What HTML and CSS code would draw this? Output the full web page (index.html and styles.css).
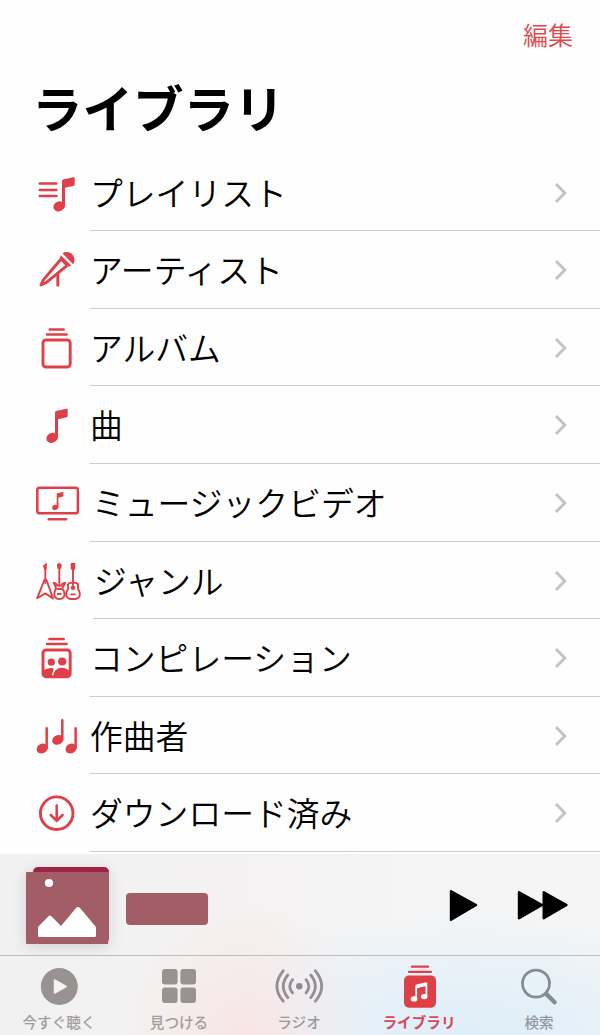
FILE: index.html
```html
<!DOCTYPE html>
<html lang="ja">
<head>
<meta charset="utf-8">
<title>ライブラリ</title>
<link rel="stylesheet" href="styles.css">
</head>
<body>
<svg class="defs" width="0" height="0">
  <symbol id="note" viewBox="0 0 22 35" overflow="visible">
    <path d="M9 3.9Q9 2.8 10.1 2.5L20.3.2Q21.7 0 21.7 1V7.6Q21.7 8.5 20.8 8.7L12 10.8V29H9Z"/>
    <ellipse cx="5.9" cy="29.4" rx="5.7" ry="4.9" transform="rotate(-25 5.9 29.4)"/>
    <path d="M9 20H12V29Q12 31 10 32Z"/>
  </symbol>
  <symbol id="chevron" viewBox="0 0 14 24"><path d="M2 2.9L10.8 12L2 21.1"/></symbol>
</svg>
<main class="app">
  <header class="nav"><a class="edit">編集</a></header>
  <h1 class="title">ライブラリ</h1>
  <ul class="list">
    <li class="row">
      <svg class="icon" viewBox="0 0 90 77"><path class="line thin" d="M39.8 29.6H56.4M39.8 36H56.4M39.8 42H56.4"/><use href="#note" x="53" y="23" width="22" height="35"/></svg>
      <div class="cell"><span>プレイリスト</span><svg class="chev"><use href="#chevron"/></svg></div>
    </li>
    <li class="row">
      <svg class="icon" viewBox="0 0 90 77"><path d="M62.5 22.5C66 19.7 70.6 21 72.8 24C75.1 27 75.1 30.8 73 33.2Z"/><path d="M60.9 24.2L71.2 34.6Q69.2 36 66.5 35.4L60.2 29.2Q59.5 26.4 60.9 24.2Z"/><path class="gap" d="M61.6 23.1L72.7 34.2"/><path class="line" d="M60.2 29L43.2 49.1L41 54L45.9 51.8L66.3 35.2"/><path class="line" d="M57.8 42.5V54.3"/></svg>
      <div class="cell"><span>アーティスト</span><svg class="chev"><use href="#chevron"/></svg></div>
    </li>
    <li class="row">
      <svg class="icon" viewBox="0 0 90 77"><path class="line thin" d="M49.7 20.4H63.7M47 25.4H66.6"/><rect class="line" x="43" y="31" width="27.2" height="27" rx="3"/></svg>
      <div class="cell"><span>アルバム</span><svg class="chev"><use href="#chevron"/></svg></div>
    </li>
    <li class="row">
      <svg class="icon" viewBox="0 0 90 77"><use href="#note" x="46" y="22.5" width="22" height="35"/></svg>
      <div class="cell"><span>曲</span><svg class="chev"><use href="#chevron"/></svg></div>
    </li>
    <li class="row wide">
      <svg class="icon" viewBox="0 0 90 77"><rect class="line thin" x="37.3" y="23.7" width="40.6" height="25.6" rx="2.4"/><path class="line thin" d="M48.8 55.2H66.2"/><use href="#note" x="51.3" y="28" width="13" height="18.4"/></svg>
      <div class="cell"><span>ミュージックビデオ</span><svg class="chev"><use href="#chevron"/></svg></div>
    </li>
    <li class="row wider">
      <svg class="icon" viewBox="0 0 90 77"><path d="M42.6 24L46.8 20.6V26.6L45.5 29L44 26ZM56.9 22.6L59.3 20.7L61.7 22.6L61.2 26.8H57.4ZM70.7 21H75.3V26.6L73.8 28.4H72.2L70.7 26.6Z"/><path class="line fine" d="M45.3 26V41M59.3 26V44M73 26V43"/><path class="line fine" d="M44.4 38L37.2 56.2L45.3 51.4L53 56.4L46.5 38ZM53.6 40.6Q56.6 41 57.4 43.6H61.2Q62 41 65.2 40.6Q64 43.4 62.9 44.8Q61.7 46.8 63.7 48.7Q66 54.4 61.8 56.6Q59.3 57.3 56.8 56.6Q52.9 54.4 55 48.6Q56.7 46.3 55.3 44.4ZM70.2 40.9H76Q78.9 41.8 78 44.8Q77.3 46.5 78.9 48.4Q81.8 54.7 76.5 56.8Q73 57.3 69.6 56.8Q64.4 54.7 67.2 48.4Q68.8 46.5 68 44.8Q67.2 41.8 70.2 40.9Z"/><path class="line fine" d="M57.4 47H61.2M57.8 52H60.8M71.2 52.4H74.8"/><circle cx="73" cy="45.8" r="2.2"/></svg>
      <div class="cell"><span>ジャンル</span><svg class="chev"><use href="#chevron"/></svg></div>
    </li>
    <li class="row">
      <svg class="icon" viewBox="0 0 90 77"><path class="line thin" d="M49.4 20.1H63.7M47 25.1H66.6"/><rect class="line" x="43" y="31" width="27.2" height="26.7" rx="3"/><circle cx="51.3" cy="43.2" r="3.6"/><circle cx="62.2" cy="42.5" r="4.1"/><path d="M43 51.8Q46.5 48.9 51.5 49.1Q54.1 49.4 53.5 51.4Q51.4 54 52 57.5H45Q43 57 43 55ZM53.3 57.5Q53.8 48.8 62 48.8Q66.6 48.8 70 52.5V57.5Z"/></svg>
      <div class="cell"><span>コンピレーション</span><svg class="chev"><use href="#chevron"/></svg></div>
    </li>
    <li class="row">
      <svg class="icon" viewBox="0 0 90 77"><path class="line thin" d="M46.7 31.2V51M62.3 23.2V42.6M75.6 31.2V51"/><ellipse cx="42.2" cy="51.5" rx="5.8" ry="4.7" transform="rotate(-28 42.2 51.5)"/><ellipse cx="57.8" cy="42.9" rx="5.8" ry="4.7" transform="rotate(-28 57.8 42.9)"/><ellipse cx="71.1" cy="51.5" rx="5.8" ry="4.7" transform="rotate(-28 71.1 51.5)"/></svg>
      <div class="cell"><span>作曲者</span><svg class="chev"><use href="#chevron"/></svg></div>
    </li>
    <li class="row">
      <svg class="icon" viewBox="0 0 90 77"><circle class="line" cx="56.7" cy="39.2" r="16.3"/><path class="line thin" d="M56.7 31.4V46.6M50.8 41L56.7 46.9L62.6 41"/></svg>
      <div class="cell"><span>ダウンロード済み</span><svg class="chev"><use href="#chevron"/></svg></div>
    </li>
  </ul>
  <footer class="dock">
    <section class="player">
      <svg class="art" viewBox="0 0 83 77"><rect class="cover" x="7" y="0" width="76" height="76" rx="5"/><path class="photo" d="M1 5H82Q83 5 83 6V70L82 76V77H1Q0 77 0 76V6Q0 5 1 5Z"/><circle class="white" cx="23" cy="16" r="4.1"/><path class="white" d="M12 60L22.3 49.4Q24 47.8 25.6 49.4L35 59L49.8 41.2Q52 38.8 54.2 41.2L70 60V68.5Q70 70 68.5 70H13.5Q12 70 12 68.5Z"/></svg>
      <div class="track"></div>
      <svg class="controls" viewBox="0 0 120 34"><path d="M3 3.2L28 17L3 31.8ZM71 4.2L94 17L71 30.2ZM95.7 4.2L118.5 17L95.7 30.2Z"/></svg>
    </section>
    <nav class="tabs">
      <a class="tab warm"><svg viewBox="0 0 60 48"><circle cx="30.3" cy="24.5" r="18.5"/><path class="hole" d="M25.5 18L37.2 24.5L25.5 31Z"/></svg><span>今すぐ聴く</span></a>
      <a class="tab warm"><svg viewBox="0 0 60 48"><rect x="13" y="7" width="15.6" height="15.6" rx="3"/><rect x="31.4" y="7" width="15.6" height="15.6" rx="3"/><rect x="13" y="25.4" width="15.6" height="15.6" rx="3"/><rect x="31.4" y="25.4" width="15.6" height="15.6" rx="3"/></svg><span>見つける</span></a>
      <a class="tab"><svg viewBox="0 0 60 48"><circle cx="30.3" cy="24.3" r="3.2"/><g class="wave"><path d="M23.5 17.7Q18 24.3 23.5 30.9M18.8 13Q9.7 24.3 18.8 35.6M14.2 8.8Q1.6 24.3 14.2 39.2M37.1 17.7Q42.6 24.3 37.1 30.9M41.8 13Q50.9 24.3 41.8 35.6M46.4 8.8Q59 24.3 46.4 39.2"/></g></svg><span>ラジオ</span></a>
      <a class="tab active"><svg viewBox="0 0 60 48"><path class="line" d="M23 4.7H39M20 9.8H42"/><rect x="15" y="13.6" width="32" height="32.2" rx="5"/><path class="notes" d="M27.2 36.2V24.1L37.4 21.6V34"/><path class="beam" d="M27.2 24.6L37.4 22.1"/><ellipse class="white" cx="25" cy="36.9" rx="3.3" ry="2.6"/><ellipse class="white" cx="35.2" cy="34.6" rx="3.3" ry="2.6"/></svg><span>ライブラリ</span></a>
      <a class="tab"><svg viewBox="0 0 60 48"><circle class="lens" cx="27" cy="21.6" r="13.5"/><path class="handle" d="M37.2 31.9L45.6 40.3"/></svg><span>検索</span></a>
    </nav>
  </footer>
</main>
</body>
</html>
```
FILE: styles.css
```css
* { box-sizing: border-box; }

body {
  margin: 0;
  background: #fefefe;
  color: #000;
  font-family: "Noto Sans CJK JP", sans-serif;
}

.defs { display: block; }

.app {
  display: flex;
  flex-direction: column;
  width: 600px;
  height: 1035px;
  overflow: hidden;
}

.nav {
  display: flex;
  justify-content: flex-end;
  height: 70px;
  padding: 16px 27px 0 0;
}

.edit {
  color: #e3484f;
  font-size: 25px;
  line-height: 36px;
  font-weight: 350;
}

.title {
  margin: 0;
  height: 83.7px;
  padding-left: 32px;
  font-size: 50.5px;
  font-weight: 700;
  line-height: 73px;
}

.list {
  height: 700.3px;
  margin: 0;
  padding: 0;
  list-style: none;
}

.row {
  display: flex;
  height: 77.6px;
}

.icon {
  flex: none;
  width: 90px;
  height: 77px;
  fill: #df4048;
}

.line {
  fill: none;
  stroke: #df4048;
  stroke-width: 2.9;
  stroke-linecap: round;
  stroke-linejoin: round;
}

.line.thin { stroke-width: 2.5; }
.line.fine { stroke-width: 1.9; }
.gap { stroke: #fefefe; stroke-width: 1.5; }

.cell {
  display: flex;
  flex: 1;
  justify-content: space-between;
  padding-right: 32px;
  border-bottom: 1px solid #cecece;
  font-size: 32.8px;
  font-weight: 350;
  line-height: 76px;
}

.wide span { padding-left: 2px; }
.wider .icon { margin-right: 3px; }
.wider span { padding-left: 1px; }

.chev {
  width: 14px;
  height: 24px;
  margin-top: 27px;
  fill: none;
  stroke: #c3c3c5;
  stroke-width: 2.9;
}

.dock {
  height: 181px;
  background:
    radial-gradient(ellipse 125px 130px at 245px 181px, #f9e5e5 0%, rgba(249, 232, 232, 0) 100%),
    radial-gradient(ellipse 290px 125px at 465px 181px, #deeef8 0%, #e6f1f8 45%, rgba(238, 243, 247, 0) 100%),
    linear-gradient(90deg, #f2f1f2 0%, #f4f2f2 45%, #f5f5f6 70%);
}

.player {
  display: flex;
  align-items: flex-start;
  height: 102px;
  padding: 13px 32px 0 26px;
  border-bottom: 1px solid #bebebf;
}

.art {
  width: 83px;
  height: 77px;
  filter: drop-shadow(0 3px 7px rgba(70, 60, 65, .18));
}

.cover { fill: #9e2446; }
.photo { fill: #a35d66; }
.white { fill: #fff; }

.track {
  width: 82px;
  height: 32px;
  margin: 26px auto 0 17px;
  border-radius: 4px;
  background: #a35d66;
}

.controls {
  width: 120px;
  height: 34px;
  margin-top: 21px;
  stroke: #000;
  stroke-width: 2.4;
  stroke-linejoin: round;
}

.tabs {
  display: grid;
  grid-template-columns: repeat(5, 120px);
  margin-left: -1px;
  padding-top: 6px;
}

.tab {
  display: flex;
  flex-direction: column;
  align-items: center;
  color: #94989f;
  fill: #858d93;
  stroke-linecap: round;
  font-size: 14.6px;
  font-weight: 500;
  line-height: 24px;
}

.tab svg { width: 60px; height: 48px; }
.warm { color: #a09c9d; fill: #989292; }

.hole {
  fill: #f5f2f2;
  stroke: #f5f2f2;
  stroke-width: 1.5;
  stroke-linejoin: round;
}

.wave, .lens, .handle {
  fill: none;
  stroke: #858d93;
  stroke-width: 2.8;
}

.wave { stroke: #928f95; }
.handle { stroke-width: 4.4; }
.active { color: #d9475b; fill: #df4048; font-weight: 700; }
.active .line { stroke-width: 2.3; }
.notes { fill: none; stroke: #fff; stroke-width: 1.8; }
.beam { stroke: #fff; stroke-width: 3.6; stroke-linecap: butt; }
```
